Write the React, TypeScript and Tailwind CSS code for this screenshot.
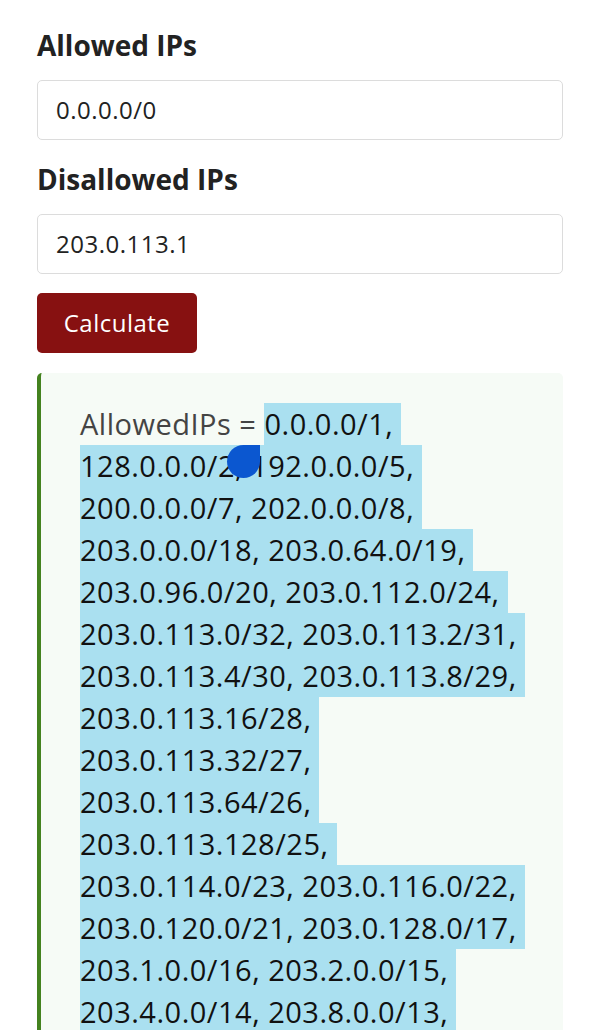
import React from "react";

const lines: string[] = [
  "128.0.0.0/2, 192.0.0.0/5, ",
  "200.0.0.0/7, 202.0.0.0/8, ",
  "203.0.0.0/18, 203.0.64.0/19, ",
  "203.0.96.0/20, 203.0.112.0/24, ",
  "203.0.113.0/32, 203.0.113.2/31, ",
  "203.0.113.4/30, 203.0.113.8/29, ",
  "203.0.113.16/28, ",
  "203.0.113.32/27, ",
  "203.0.113.64/26, ",
  "203.0.113.128/25, ",
  "203.0.114.0/23, 203.0.116.0/22, ",
  "203.0.120.0/21, 203.0.128.0/17, ",
  "203.1.0.0/16, 203.2.0.0/15, ",
  "203.4.0.0/14, 203.8.0.0/13, ",
  "203.16.0.0/12, 203.32.0.0/11, ",
];

export default function App() {
  return (
    <div
      className="min-h-screen bg-white px-[37px] pt-[26px] pb-10 text-[#222]"
      style={{ fontFamily: '"Open Sans", "Noto Sans", sans-serif' }}
    >
      <h2 className="text-[28px] font-bold leading-[38px] text-[#222]">Allowed IPs</h2>
      <div className="mt-[16px] flex h-[60px] items-center rounded-[5px] border border-[#dcdcdc] bg-white pl-[18px] text-[24px] tracking-[0.5px] text-[#222]">
        0.0.0.0/0
      </div>
      <h2 className="mt-[20px] text-[28px] font-bold leading-[38px] text-[#222]">Disallowed IPs</h2>
      <div className="mt-[16px] flex h-[60px] items-center rounded-[5px] border border-[#dcdcdc] bg-white pl-[18px] text-[24px] tracking-[0.5px] text-[#222]">
        203.0.113.1
      </div>
      <button className="mt-[19px] flex h-[60px] w-[160px] items-center justify-center rounded-[5px] bg-[#871111] text-[24px] tracking-[0.5px] text-white">
        Calculate
      </button>
      <div className="mt-[20px] rounded-[5px] border-l-4 border-[#44821f] bg-[#f6fbf6] pl-[39px] pt-[30px] pb-10 text-[29px] leading-[42px] tracking-[0.5px]">
        <div className="whitespace-pre">
          <span className="text-[#444]">AllowedIPs = </span>
          <span className="inline-block bg-[#aae0f0] text-[#111]">0.0.0.0/1, </span>
        </div>
        {lines.map((l, i) => (
          <div key={i} className="relative whitespace-pre">
            <span className="inline-block bg-[#aae0f0] text-[#111]">{l}</span>
            {i === 0 && (
              <span className="absolute left-[147px] top-[0px] h-[33px] w-[33px] rounded-l-full rounded-br-full bg-[#0b57d0]" />
            )}
          </div>
        ))}
      </div>
    </div>
  );
}
